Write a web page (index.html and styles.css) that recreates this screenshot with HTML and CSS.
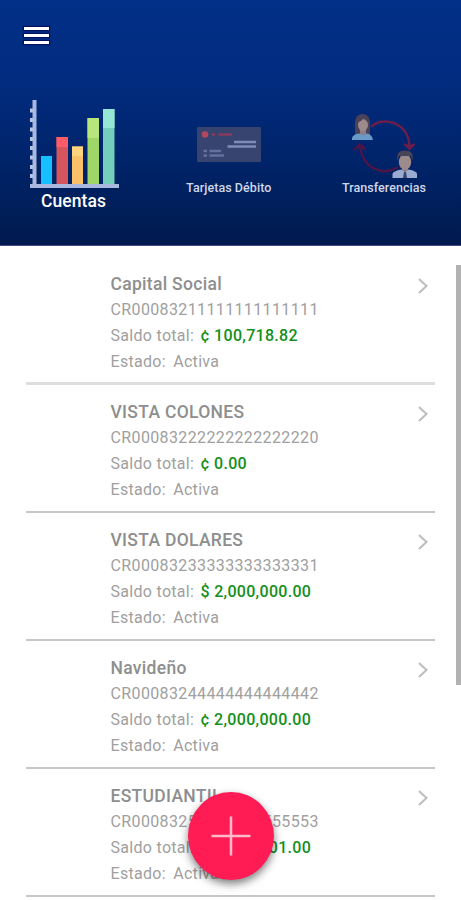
FILE: index.html
```html
<!DOCTYPE html>
<html lang="es">
	<head>
		<meta charset="UTF-8" />
		<meta name="viewport" content="width=device-width, initial-scale=1.0" />
		<title>Cuentas</title>
		<link rel="stylesheet" href="styles.css">
	</head>
	<body>
		<header class="header">
			<button class="menu-button" aria-label="Menú">
				<span></span>
				<span></span>
				<span></span>
			</button>
			<nav class="tabs">
				<a class="tab active">
					<svg width="92" height="90" viewBox="0 0 92 90">
						<path d="M2 10.500H6M2 20H6M2 29.500H6M2 39H6M2 48H6M2 57.500H6M2 67H6M2 76H6" stroke="#b7c4e6" stroke-width="3.800" />
						<path d="M6.500 0V86M2 86H91" fill="none" stroke="#a9b8de" stroke-width="4" />
						<path d="M13 56H24V84H13Z" fill="#16bfff" />
						<path d="M28.500 37H40V84H28.500Z" fill="#d5545d" />
						<path d="M28.500 37H40V47H28.500Z" fill="#fb5c68" />
						<path d="M44 46.500H55V84H44Z" fill="#fbc168" />
						<path d="M44 46.500H55V56H44Z" fill="#ffd47c" />
						<path d="M59.500 18H71V84H59.500Z" fill="#a0d668" />
						<path d="M59.500 18H71V38H59.500Z" fill="#b8e67c" />
						<path d="M75 9H86.500V84H75Z" fill="#73cfbb" />
						<path d="M75 9H86.500V28H75Z" fill="#96e6d5" />
					</svg>
					<span>Cuentas</span>
				</a>
				<a class="tab">
					<svg width="66" height="66" viewBox="0 0 66 66">
						<rect x="1" y="15" width="64" height="35" rx="1" fill="#36446f" />
						<circle cx="9" cy="22.500" r="3.300" fill="#b34660" />
						<path d="M16 22.500H19M22.500 22.500H36" stroke="#87395f" stroke-width="2.600" />
						<path d="M38 30H60M31.500 34.500H60" stroke="#7f8cb8" stroke-width="2.400" />
						<path d="M7.500 39H11M7.500 43.500H11M13.500 39H25M13.500 43.500H28" stroke="#6470a0" stroke-width="2.600" />
					</svg>
					<span>Tarjetas Débito</span>
				</a>
				<a class="tab">
					<svg width="66" height="66" viewBox="0 0 66 66">
						<path d="M20 15C31 4 56 9 58.500 33" fill="none" stroke="#6d1d4c" stroke-width="2.400" />
						<path d="M53 32L58.500 37.500L64 32L58.500 34Z" fill="#6d1d4c" stroke="#6d1d4c" stroke-width="1.500" />
						<path d="M9.500 34C10 53 29 66 47 55" fill="none" stroke="#4c1548" stroke-width="2.400" />
						<path d="M3.500 37L9 31.500L15 37L9 35.500Z" fill="#4c1548" stroke="#4c1548" stroke-width="1.500" />
						<path d="M4 23V11C4 -1 19 -1 19 11V23Z" fill="#4b4259" />
						<path d="M9 14H15V24H9Z" fill="#8c7d85" />
						<ellipse cx="12" cy="13" rx="5" ry="6" fill="#9d8a8a" />
						<path d="M6 10Q11 10 13 5Q14 9 18 10Q17 3 12 3Q7 3 6 10Z" fill="#4b4259" />
						<path d="M1 28V26Q2 22 8.500 21.500Q12 25 15.500 21.500Q21 22 22 28Z" fill="#6899c8" />
						<path d="M51 50H57V60H51Z" fill="#8c7d85" />
						<ellipse cx="54" cy="50" rx="6.200" ry="7.700" fill="#9d8a8a" />
						<path d="M46.500 49Q44.500 38 54 38.500Q63.500 38 61.500 49L60 44H48Z" fill="#494356" />
						<path d="M41.500 66V62Q42 59 50.500 57.500L54 60.500L57.500 57.500Q66 59 66 62V66Z" fill="#9aacd2" />
						<path d="M53 60H55L56 66H52Z" fill="#3b456f" />
					</svg>
					<span>Transferencias</span>
				</a>
			</nav>
		</header>

		<main class="content">
			<ul class="accounts">
				<li class="account">
					<div class="account-info">
						<h2>Capital Social</h2>
						<p class="number">CR00083211111111111111</p>
						<p>Saldo total: <b class="balance">¢ 100,718.82</b></p>
						<p>Estado: <span class="state">Activa</span></p>
					</div>
					<svg class="arrow" width="12" height="18" viewBox="0 0 12 18"><path d="M2 2L9.500 9L2 16" /></svg>
				</li>
				<li class="account">
					<div class="account-info">
						<h2>VISTA COLONES</h2>
						<p class="number">CR00083222222222222220</p>
						<p>Saldo total: <b class="balance">¢ 0.00</b></p>
						<p>Estado: <span class="state">Activa</span></p>
					</div>
					<svg class="arrow" width="12" height="18" viewBox="0 0 12 18"><path d="M2 2L9.500 9L2 16" /></svg>
				</li>
				<li class="account">
					<div class="account-info">
						<h2>VISTA DOLARES</h2>
						<p class="number">CR00083233333333333331</p>
						<p>Saldo total: <b class="balance">$ 2,000,000.00</b></p>
						<p>Estado: <span class="state">Activa</span></p>
					</div>
					<svg class="arrow" width="12" height="18" viewBox="0 0 12 18"><path d="M2 2L9.500 9L2 16" /></svg>
				</li>
				<li class="account">
					<div class="account-info">
						<h2>Navideño</h2>
						<p class="number">CR00083244444444444442</p>
						<p>Saldo total: <b class="balance">¢ 2,000,000.00</b></p>
						<p>Estado: <span class="state">Activa</span></p>
					</div>
					<svg class="arrow" width="12" height="18" viewBox="0 0 12 18"><path d="M2 2L9.500 9L2 16" /></svg>
				</li>
				<li class="account">
					<div class="account-info">
						<h2>ESTUDIANTIL</h2>
						<p class="number">CR00083255555555555553</p>
						<p>Saldo total: <b class="balance">¢ 2,000,001.00</b></p>
						<p>Estado: <span class="state">Activa</span></p>
					</div>
					<svg class="arrow" width="12" height="18" viewBox="0 0 12 18"><path d="M2 2L9.500 9L2 16" /></svg>
				</li>
			</ul>
			<div class="scrollbar"></div>
		</main>

		<button class="add-button" aria-label="Agregar">
			<svg width="40" height="40" viewBox="0 0 40 40"><path d="M20 0.500V39.500M0.500 20H39.500" /></svg>
		</button>
	</body>
</html>
```
FILE: styles.css
```css
* {
	box-sizing: border-box;
}

body {
	margin: 0;
	height: 900px;
	overflow: hidden;
	background-color: #fff;
	font-family: Roboto, Arial, sans-serif;
}

h2,
p,
ul {
	margin: 0;
	padding: 0;
}

button {
	border: none;
	padding: 0;
}

.header {
	height: 246px;
	padding: 27px 24px 0 24px;
	background: linear-gradient(#022f87 0%, #022c80 32%, #00246a 65%, #001a4e 100%);
	border-bottom: 1px solid #4b4789;
}

.menu-button {
	display: flex;
	flex-direction: column;
	gap: 4px;
	width: 25px;
	background: none;
}

.menu-button span {
	height: 3px;
	background-color: #fff;
	box-shadow: 0 0 1px 1px #02105f;
}

.tabs {
	display: flex;
	justify-content: space-between;
	margin-top: 56px;
}

.tab {
	display: flex;
	flex-direction: column;
	align-items: center;
	width: 99px;
	padding-top: 12px;
	color: #d0d7ea;
	font-size: 12.5px;
	font-weight: 500;
	line-height: 16px;
	letter-spacing: 0.06px;
	white-space: nowrap;
}

.tab span {
	margin-top: 2px;
}

.tab:last-child {
	margin-right: 3.5px;
}

.tab.active {
	padding-top: 0;
	color: #fff;
	font-size: 17.5px;
	line-height: 22px;
}

.tab.active span {
	margin-top: 0;
}

.content {
	display: flex;
	justify-content: space-between;
	height: 654px;
	padding: 18px 0 0 26px;
}

.accounts {
	width: 409px;
	list-style: none;
}

.account {
	display: flex;
	justify-content: space-between;
	height: 128px;
	padding: 15px 6px 0 84.5px;
	border-bottom: 2px solid #c6c6c6;
}

.account:first-child {
	height: 121px;
	padding-top: 8px;
	border-bottom: 3px solid #dedede;
}

.account-info {
	color: #a0a0a0;
	font-size: 16px;
	line-height: 25.5px;
	letter-spacing: 0.3px;
	white-space: nowrap;
}

.account-info h2 {
	color: #8e8e8e;
	font-size: 17.5px;
	font-weight: 500;
	line-height: 25px;
	letter-spacing: 0.3px;
}

.account-info .number {
	padding-bottom: 1px;
	line-height: 25px;
	letter-spacing: 0.37px;
}

.balance {
	margin-left: 2px;
	color: #148f1c;
	font-weight: 500;
}

.state {
	margin-left: 3px;
}

.arrow {
	margin-top: 5px;
	fill: none;
	stroke: #bdbdbd;
	stroke-width: 2;
}

.scrollbar {
	width: 5px;
	height: 420px;
	margin-top: 1px;
	background-color: #b2b2b2;
}

/* floats over the list */
.add-button {
	position: absolute;
	left: 188px;
	top: 792px;
	display: flex;
	align-items: center;
	justify-content: center;
	width: 86px;
	height: 88px;
	border-radius: 50%;
	background-color: #ff1c55;
	box-shadow: 0 4px 9px rgba(0, 0, 0, 0.5);
}

.add-button svg {
	stroke: #ffb9c9;
	stroke-width: 2.5;
}
```
